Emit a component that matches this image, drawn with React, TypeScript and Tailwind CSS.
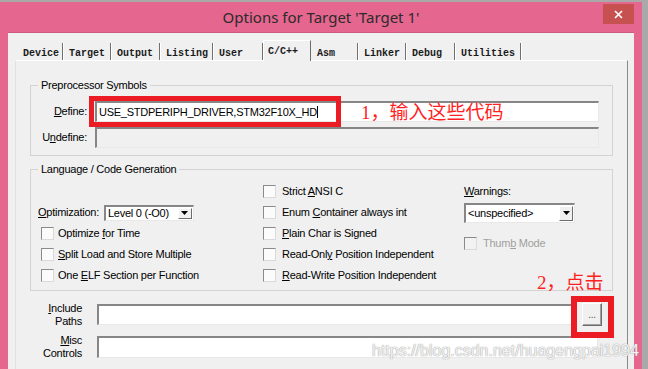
import React from 'react';

const Key: React.FC<{ text: string; at: number }> = ({ text, at }) => (
  <span>
    {text.slice(0, at)}
    <span className="underline underline-offset-1">{text[at]}</span>
    {text.slice(at + 1)}
  </span>
);

const Check: React.FC<{ disabled?: boolean }> = ({ disabled }) => (
  <span
    className={`w-[13px] h-[13px] shrink-0 border border-t-[#8a8a8a] border-l-[#8a8a8a] border-r-[#dadada] border-b-[#dadada] ${
      disabled ? 'bg-[#f2f2f2]' : 'bg-[#fbfbfb]'
    }`}
  />
);

const sunken =
  'border-t-2 border-l-2 border-r border-b border-t-[#868686] border-l-[#868686] border-r-[#e8e8e8] border-b-[#e8e8e8]';

const DropDown: React.FC<{ value: string; className: string }> = ({ value, className }) => (
  <div className={`flex bg-white ${sunken} ${className}`}>
    <span className="flex-1 flex items-center pl-[2px] whitespace-nowrap">{value}</span>
    <span className="w-[14px] my-[1px] mr-[1px] bg-[#f0f0f0] border border-t-white border-l-white border-r-[#6d6d6d] border-b-[#6d6d6d] flex items-center justify-center">
      <svg width="7" height="4" viewBox="0 0 7 4">
        <path d="M0 0h7L3.5 4z" fill="#000" />
      </svg>
    </span>
  </div>
);

const tabs: { label: string; w: number; active?: boolean }[] = [
  { label: 'Device', w: 46 },
  { label: 'Target', w: 48 },
  { label: 'Output', w: 49 },
  { label: 'Listing', w: 53 },
  { label: 'User', w: 50 },
  { label: 'C/C++', w: 48, active: true },
  { label: 'Asm', w: 47 },
  { label: 'Linker', w: 48 },
  { label: 'Debug', w: 49 },
  { label: 'Utilities', w: 66 },
];

const leftChecks: [string, number][] = [
  ['Optimize for Time', 9],
  ['Split Load and Store Multiple', 0],
  ['One ELF Section per Function', 4],
];

const midChecks: [string, number][] = [
  ['Strict ANSI C', 7],
  ['Enum Container always int', 5],
  ['Plain Char is Signed', 0],
  ['Read-Only Position Independent', 8],
  ['Read-Write Position Independent', 0],
];

const App: React.FC = () => {
  return (
    <div className="relative w-[648px] h-[369px] overflow-hidden bg-[#a9a9a9] pt-[2px] font-['Liberation_Sans',Arial,sans-serif] text-[11px] tracking-[-0.25px] text-black">
      <div className="w-[642px] h-full bg-[#e5668e] flex flex-col">
        {/* title bar */}
        <div className="h-[30px] shrink-0 grid grid-cols-[1fr_auto_1fr] items-center">
          <div />
          <div className="font-['Noto_Sans',sans-serif] text-[15px] tracking-normal text-[#2b2b2b] pt-[1px]">
            Options for Target 'Target 1'
          </div>
          <div className="flex justify-end self-start pt-[2px] pr-[8px]">
            <div className="w-[31px] h-[20px] bg-[#c75050] flex items-center justify-center">
              <svg width="9" height="9" viewBox="0 0 9 9">
                <path d="M1 1l7 7M8 1L1 8" stroke="#fff" strokeWidth="1.6" />
              </svg>
            </div>
          </div>
        </div>

        {/* client area */}
        <div className="flex-1 mx-[8px] bg-[#f0f0f0] border-t border-[#cc5a80] pt-[7px] pl-[7px] pr-[6px] flex flex-col">
          {/* tabs */}
          <div className="flex items-end h-[20px] pl-[2px] font-['Liberation_Mono',monospace] text-[10px] font-bold tracking-normal text-[#1a1a1a]">
            {tabs.map(t =>
              t.active ? (
                <div
                  key={t.label}
                  style={{ width: t.w }}
                  className="relative z-10 h-[21px] -mb-px bg-[#f0f0f0] border-l border-t border-l-white border-t-white border-r border-r-[#6d6d6d] pl-[4px] pt-[3px]"
                >
                  {t.label}
                </div>
              ) : (
                <div
                  key={t.label}
                  style={{ width: t.w }}
                  className="h-[17px] border-r border-r-[#707070] shadow-[1px_0_0_#fff] pl-[6px] pt-[3px]"
                >
                  {t.label}
                </div>
              )
            )}
          </div>

          {/* tab panel */}
          <div className="flex-1 border-t border-l border-t-white border-l-[#e2e2e2] border-r border-r-[#8a8a8a] pt-[18px]">
            {/* Preprocessor Symbols */}
            <fieldset className="mx-[14px] border border-[#d3d3d3] pl-[7px] pr-[13px] pb-[7px]">
              <legend className="px-[3px] leading-[13px]">Preprocessor Symbols</legend>
              <div className="mt-[9px] flex items-center h-[21px]">
                <div className="w-[49px] text-right">
                  <Key text="Define:" at={0} />
                </div>
                <div className={`relative ml-[8px] flex-1 h-full bg-white ${sunken} flex items-center`}>
                  <span className="pl-[2px] whitespace-nowrap">USE_STDPERIPH_DRIVER,STM32F10X_HD</span>
                  <span className="w-px h-[12px] bg-black" />
                  <span className="ml-[43px] font-['Liberation_Serif','Noto_Sans_CJK_SC',serif] text-[19px] leading-none tracking-normal text-[#ff1f1f]">
                    1，输入这些代码
                  </span>
                  <div className="absolute left-[-8px] top-[-7px] w-[252px] h-[31px] border-[5px] border-[#ec1c24]" />
                </div>
              </div>
              <div className="mt-[5px] flex items-center h-[21px]">
                <div className="w-[49px] text-right">
                  <Key text="Undefine:" at={1} />
                </div>
                <div className={`ml-[8px] flex-1 h-full bg-[#f0f0f0] ${sunken}`} />
              </div>
            </fieldset>

            {/* Language / Code Generation */}
            <fieldset className="mt-[7px] mx-[14px] border border-[#d3d3d3] pl-[7px] pt-[5px] pb-[4px]">
              <legend className="px-[3px] leading-[13px]">Language / Code Generation</legend>
              <div className="flex">
                <div className="w-[225px] flex flex-col">
                  <div className="h-[21px]" />
                  <div className="h-[21px] flex items-center">
                    <Key text="Optimization:" at={0} />
                    <DropDown value="Level 0 (-O0)" className="ml-[5px] w-[90px] h-[16px]" />
                  </div>
                  {leftChecks.map(([l, k]) => (
                    <div key={l} className="h-[21px] flex items-center pl-[3px] gap-[4px]">
                      <Check />
                      <Key text={l} at={k} />
                    </div>
                  ))}
                </div>
                <div className="w-[201px] flex flex-col">
                  {midChecks.map(([l, k]) => (
                    <div key={l} className="h-[21px] flex items-center gap-[6px]">
                      <Check />
                      <Key text={l} at={k} />
                    </div>
                  ))}
                </div>
                <div className="flex flex-col">
                  <div className="h-[21px] flex items-center">
                    <Key text="Warnings:" at={0} />
                  </div>
                  <div className="h-[21px] flex items-center">
                    <DropDown value="<unspecified>" className="w-[111px] h-[20px]" />
                  </div>
                  <div className="mt-[10px] h-[21px] flex items-center gap-[6px] text-[#a0a0a0]">
                    <Check disabled />
                    <Key text="Thumb Mode" at={4} />
                  </div>
                </div>
              </div>
            </fieldset>

            {/* paths */}
            <div className="mt-[10px] flex items-center">
              <div className="w-[66px] text-right leading-[13px] self-start mt-[1px]">
                <Key text="Include" at={0} />
                <br />
                Paths
              </div>
              <div className={`ml-[15px] w-[480px] h-[21px] bg-white ${sunken}`} />
              <div className="relative ml-[5px] w-[20px] h-[23px] bg-[#f0f0f0] border border-t-white border-l-white border-r-[#6d6d6d] border-b-[#6d6d6d] shadow-[inset_-1px_-1px_0_#a0a0a0] flex items-center justify-center text-[#555] text-[10px] leading-none">
                ...
                <div className="absolute left-[-12px] top-[-8px] w-[43px] h-[42px] border-[6px] border-[#ec1c24]" />
              </div>
            </div>
            <div className="mt-[8px] flex items-start">
              <div className="w-[66px] text-right leading-[13px] -mt-[2px]">
                <Key text="Misc" at={0} />
                <br />
                Controls
              </div>
              <div className={`ml-[15px] w-[501px] h-[22px] bg-white ${sunken}`} />
            </div>
            <div className="mt-[11px] flex items-start">
              <div className="w-[66px] text-right leading-[13px]">
                Compiler
                <br />
                control
              </div>
              <div className={`ml-[15px] w-[501px] h-[22px] bg-[#f0f0f0] ${sunken}`} />
            </div>
          </div>
        </div>
      </div>

      {/* annotations over the dialog */}
      <div className="absolute left-[537px] top-[273px] font-['Liberation_Serif','Noto_Sans_CJK_SC',serif] text-[19px] leading-[20px] tracking-normal text-[#ff1f1f]">
        2，点击
      </div>
      <div className="absolute left-[372px] top-[339px] font-['Liberation_Sans',Arial,sans-serif] text-[16px] tracking-normal text-white/85 [text-shadow:0_0_1px_#a0a0a0,0_0_1px_#a0a0a0]">
        https://blog.csdn.net/huagengpai1994
      </div>
    </div>
  );
};

export default App;
